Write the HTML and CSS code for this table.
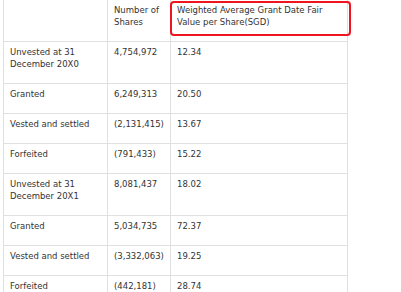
FILE: index.html
```html
<!DOCTYPE html>
<html>
<head>
<meta charset="utf-8">
<link rel="stylesheet" href="styles.css">
</head>
<body>
<table class="grid">
  <colgroup>
    <col class="c1"><col class="c2"><col class="c3">
  </colgroup>
  <thead>
    <tr>
      <th></th>
      <th>Number of Shares</th>
      <th class="hl">Weighted Average Grant Date Fair Value per Share(SGD)<span class="mark"></span></th>
    </tr>
  </thead>
  <tbody>
    <tr><td>Unvested at 31 December 20X0</td><td>4,754,972</td><td>12.34</td></tr>
    <tr><td>Granted</td><td>6,249,313</td><td>20.50</td></tr>
    <tr><td>Vested and settled</td><td>(2,131,415)</td><td>13.67</td></tr>
    <tr><td>Forfeited</td><td>(791,433)</td><td>15.22</td></tr>
    <tr><td>Unvested at 31 December 20X1</td><td>8,081,437</td><td>18.02</td></tr>
    <tr><td>Granted</td><td>5,034,735</td><td>72.37</td></tr>
    <tr><td>Vested and settled</td><td>(3,332,063)</td><td>19.25</td></tr>
    <tr><td>Forfeited</td><td>(442,181)</td><td>28.74</td></tr>
  </tbody>
</table>
</body>
</html>
```
FILE: styles.css
```css
html, body {
  margin: 0;
  padding: 0;
  background: #fff;
}
body {
  font-family: "DejaVu Sans", Verdana, sans-serif;
  font-size: 8.5px;
  line-height: 12px;
  color: #333;
}
.grid {
  border-collapse: collapse;
  margin: -1px 0 0 3px;
  table-layout: fixed;
  width: 344px;
}
.c1 { width: 104px; }
.c2 { width: 63px; }
.c3 { width: 177px; }
.grid th,
.grid td {
  border: 1px solid #e0e0e0;
  padding: 4px 6px 13px;
  text-align: left;
  vertical-align: top;
  font-weight: normal;
}
.hl {
  position: relative;
}
.mark {
  position: absolute;
  left: -1px;
  top: 1px;
  width: 181px;
  height: 35px;
  box-sizing: border-box;
  border: 2px solid #f0141e;
  border-radius: 4px;
}
```
